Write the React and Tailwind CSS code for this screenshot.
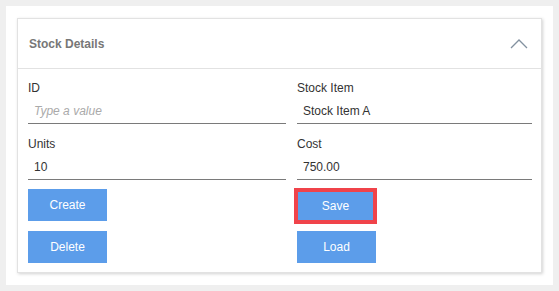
import React from 'react';

const Field = ({ label, value, placeholder, className = '' }) => (
  <div className={`flex flex-col ${className}`}>
    <label className="text-[12px] leading-[14px] text-[#333]">{label}</label>
    <input
      className="mt-[4px] h-[25px] border-b border-[#7a7a7a] px-[6px] text-[12px] text-[#333] outline-none placeholder:italic placeholder:text-[#aaa]"
      defaultValue={value}
      placeholder={placeholder}
    />
  </div>
);

const Btn = ({ children, className = '' }) => (
  <button className={`bg-[#5c9dea] text-white text-[12px] ${className}`}>{children}</button>
);

export default function App() {
  return (
    <div
      className="w-[559px] h-[291px] bg-[#efefef] p-[6px]"
      style={{ fontFamily: '"Liberation Sans", Arial, sans-serif' }}
    >
      <div className="w-[547px] h-[279px] bg-white pt-[12px] pl-[11px]">
        <div className="w-[525px] border border-[#e2e2e2] shadow-[1px_1px_3px_rgba(0,0,0,0.18)]">
          {/* header */}
          <div className="h-[50px] border-b border-[#e2e2e2] flex items-center justify-between pl-[11px] pr-[13px]">
            <span className="text-[12px] font-bold text-[#777]">Stock Details</span>
            <svg width="18" height="10" viewBox="0 0 18 10">
              <polyline points="1,9 9,1 17,9" fill="none" stroke="#8391a0" strokeWidth="1.3" />
            </svg>
          </div>

          {/* body */}
          <div className="flex pl-[10px] pt-[12px] pb-[9px]">
            <div className="w-[258px] flex flex-col">
              <Field label="ID" placeholder="Type a value" />
              <Field label="Units" value="10" className="mt-[13px]" />
              <Btn className="mt-[9px] w-[79px] h-[32px]">Create</Btn>
              <Btn className="mt-[10px] w-[79px] h-[32px]">Delete</Btn>
            </div>
            <div className="w-[235px] ml-[11px] flex flex-col">
              <Field label="Stock Item" value="Stock Item A" />
              <Field label="Cost" value="750.00" className="mt-[13px]" />
              <Btn className="mt-[8px] -ml-[3px] w-[83px] h-[36px] border-4 border-[#f0434a]">Save</Btn>
              <Btn className="mt-[7px] w-[79px] h-[32px]">Load</Btn>
            </div>
          </div>
        </div>
      </div>
    </div>
  );
}
